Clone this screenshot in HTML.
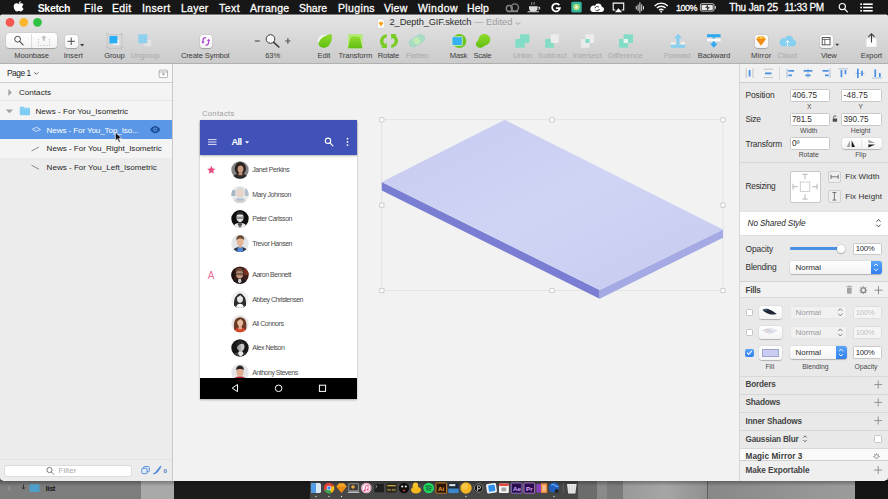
<!DOCTYPE html>
<html>
<head>
<meta charset="utf-8">
<title>Sketch</title>
<style>
*{box-sizing:border-box;margin:0;padding:0}
html,body{width:888px;height:499px;overflow:hidden;background:#7a7a7a;font-family:"Liberation Sans",sans-serif}
body{position:relative}
.a{position:absolute}
.t{position:absolute;white-space:nowrap;line-height:1}
#icons{position:absolute;left:0;top:0;width:888px;height:499px}
.inp{position:absolute;background:#fff;border:1px solid #c8c8c8;border-radius:1.5px}
.btn{position:absolute;background:linear-gradient(#ffffff,#f3f3f3);border-radius:3px;box-shadow:0 0.5px 1px rgba(0,0,0,.22),0 0 0 0.5px rgba(0,0,0,.05)}
.hr{position:absolute;height:1px;background:#d8d8d8}

</style>
</head>
<body>
<!-- desktop strip below window -->
<div class="a" style="left:0;top:480px;width:141px;height:19px;background:#7d7d7d"></div>
<div class="a" style="left:141px;top:480px;width:33px;height:19px;background:#a9a9a9"></div>
<div class="a" style="left:174px;top:480px;width:137px;height:19px;background:#1b1b1b"></div>
<div class="a" style="left:310px;top:480px;width:270px;height:19px;background:#464646"></div>
<div class="a" style="left:578px;top:480px;width:19px;height:19px;background:#6c6c6c"></div><div class="a" style="left:597px;top:480px;width:10px;height:19px;background:#8a8a8a"></div><div class="a" style="left:607px;top:480px;width:16px;height:19px;background:#7b7b7b"></div><div class="a" style="left:623px;top:480px;width:84px;height:19px;background:linear-gradient(90deg,#999,#a6a6a6 50%,#909090)"></div>
<div class="a" style="left:707px;top:480px;width:149px;height:19px;background:linear-gradient(90deg,#888,#9c9c9c);border-left:1px solid #5e5e5e"></div>
<div class="a" style="left:855px;top:480px;width:33px;height:19px;background:#151515"></div>

<div class="a" style="left:0;top:480px;width:888px;height:6px;background:linear-gradient(rgba(0,0,0,.35),rgba(0,0,0,0))"></div>
<!-- menubar -->
<div class="a" style="left:0;top:0;width:888px;height:15px;background:#171717"></div>

<!-- window -->
<div class="a" style="left:0;top:14px;width:888px;height:467px;background:#f0f0f0;border-radius:4px 4px 5px 5px;overflow:hidden">
  <!-- title+toolbar -->
  <div class="a" style="left:0;top:0;width:888px;height:50px;background:linear-gradient(#777 0,#777 1px,#ececec 1px,#e4e4e4 2.5px,#dcdcdc 35%,#cbcbcb);border-bottom:1px solid #b0b0b0"></div>
</div>

<!-- left sidebar -->
<div class="a" style="left:0;top:64px;width:173px;height:417px;background:#f4f4f4;border-right:1px solid #c9c9c9;border-radius:0 0 0 5px"></div>
<div class="a" style="left:0;top:64px;width:172px;height:18.7px;background:#f7f7f7;border-bottom:1px solid #cdcdcd"></div>
<div class="a" style="left:0;top:158px;width:172px;height:323px;background:#ececec;border-radius:0 0 0 5px"></div>
<div class="hr" style="left:0;top:100px;width:172px;background:#e6e6e6"></div>
<div class="a" style="left:0;top:120px;width:172px;height:19px;background:#5a97e6"></div>
<!-- filter bar -->
<div class="a" style="left:0;top:459px;width:172px;height:22px;background:#ececec;border-top:1px solid #e4e4e4;border-radius:0 0 0 5px"></div>
<div class="inp" style="left:4px;top:465px;width:128px;height:12px;border-radius:3px;border-color:#dbdbdb"></div>

<!-- canvas -->
<div class="a" style="left:173px;top:64px;width:566px;height:417px;background:#f2f2f2"></div>

<!-- phone artboard -->
<div class="a" style="left:200px;top:120px;width:157px;height:279px;background:#fff;box-shadow:0 0.5px 2px rgba(0,0,0,.28)"></div>
<div class="a" style="left:200px;top:120px;width:157px;height:34.5px;background:#4051b8;box-shadow:0 1px 2px rgba(0,0,0,.3)"></div>
<div class="a" style="left:200px;top:378px;width:157px;height:21px;background:#000"></div>

<!-- right inspector -->
<div class="a" style="left:739px;top:64px;width:149px;height:417px;background:#e9e9e9;border-left:1px solid #d6d6d6;border-radius:0 0 5px 0"></div>
<div class="a" style="left:740px;top:64px;width:148px;height:18.7px;background:#f1f1f1;border-bottom:1px solid #cdcdcd"></div>
<!-- inputs -->
<div class="inp" style="left:789.5px;top:89px;width:40px;height:12.5px"></div>
<div class="inp" style="left:841px;top:89px;width:40.5px;height:12.5px"></div>
<div class="inp" style="left:789.5px;top:113px;width:40px;height:12.5px"></div>
<div class="inp" style="left:841px;top:113px;width:40.5px;height:12.5px"></div>
<div class="inp" style="left:789.5px;top:137px;width:40px;height:12.5px"></div>
<div class="btn" style="left:841.5px;top:138px;width:40px;height:11px"></div>
<div class="hr" style="left:740px;top:162px;width:148px"></div>
<div class="inp" style="left:789.5px;top:170.5px;width:31.5px;height:32px;border-radius:2px"></div>
<div class="a" style="left:827.5px;top:170.5px;width:13.5px;height:12.5px;border:1px solid #cfcfcf;border-radius:2px;background:#efefef"></div>
<div class="a" style="left:827.5px;top:190px;width:13.5px;height:12.5px;border:1px solid #cfcfcf;border-radius:2px;background:#efefef"></div>
<!-- shared style -->
<div class="a" style="left:740px;top:211px;width:148px;height:24.5px;background:#fff;border-top:1px solid #e4e4e4;border-bottom:1px solid #e0e0e0"></div>
<!-- opacity -->
<div class="a" style="left:790px;top:247px;width:51px;height:2.6px;background:#4a90e2;border-radius:1.3px"></div>
<div class="a" style="left:837px;top:244.5px;width:8px;height:8px;border-radius:50%;background:#fff;box-shadow:0 0.5px 1.5px rgba(0,0,0,.45)"></div>
<div class="inp" style="left:853px;top:243px;width:28.5px;height:11.5px"></div>
<!-- blending select -->
<div class="btn" style="left:790px;top:261px;width:91.5px;height:12.5px;border-radius:2.5px"></div>
<div class="a" style="left:870.5px;top:261px;width:11px;height:12.5px;background:linear-gradient(#5aa5f6,#2f7ff0);border-radius:0 2.5px 2.5px 0"></div>
<!-- fills header -->
<div class="a" style="left:740px;top:280.5px;width:148px;height:17.5px;background:#f1f1f1;border-top:1px solid #d4d4d4;border-bottom:1px solid #dcdcdc"></div>
<!-- fill rows -->
<div class="a" style="left:745.5px;top:308.5px;width:7.5px;height:7.5px;background:#fff;border:1px solid #c4c4c4;border-radius:1.5px"></div>
<div class="a" style="left:745.5px;top:328.5px;width:7.5px;height:7.5px;background:#fff;border:1px solid #c4c4c4;border-radius:1.5px"></div>
<div class="a" style="left:745px;top:348.5px;width:8.5px;height:8.5px;background:linear-gradient(#59a4f5,#2f7eef);border-radius:2px"></div>
<div class="btn" style="left:758.5px;top:305.5px;width:23px;height:13.5px"></div>
<div class="btn" style="left:758.5px;top:325.5px;width:23px;height:13.5px"></div>
<div class="btn" style="left:758.5px;top:345.5px;width:23px;height:14px"></div>
<div class="a" style="left:761.5px;top:348.5px;width:17px;height:8px;background:#c9cdf1;border:0.5px solid #9fa3c9"></div>
<div class="a" style="left:790px;top:305.5px;width:56.5px;height:13.5px;background:#f1f1f1;border:1px solid #e6e6e6;border-radius:2.5px"></div>
<div class="a" style="left:790px;top:325.5px;width:56.5px;height:13.5px;background:#f1f1f1;border:1px solid #e6e6e6;border-radius:2.5px"></div>
<div class="btn" style="left:790px;top:345.5px;width:56.5px;height:13.5px;border-radius:2.5px"></div>
<div class="a" style="left:835.5px;top:345.5px;width:11px;height:13.5px;background:linear-gradient(#5aa5f6,#2f7ff0);border-radius:0 2.5px 2.5px 0"></div>
<div class="a" style="left:853px;top:306px;width:28.5px;height:12.5px;background:#f4f4f4;border:1px solid #dedede;border-radius:1.5px"></div>
<div class="a" style="left:853px;top:326px;width:28.5px;height:12.5px;background:#f4f4f4;border:1px solid #dedede;border-radius:1.5px"></div>
<div class="inp" style="left:853px;top:346px;width:28.5px;height:12.5px"></div>
<!-- section dividers -->
<div class="hr" style="left:740px;top:375.5px;width:148px"></div>
<div class="hr" style="left:740px;top:393.5px;width:148px"></div>
<div class="hr" style="left:740px;top:411.5px;width:148px"></div>
<div class="hr" style="left:740px;top:429.5px;width:148px"></div>
<div class="hr" style="left:740px;top:447.5px;width:148px"></div>
<div class="a" style="left:874px;top:434.5px;width:8px;height:8px;background:#fff;border:1px solid #c4c4c4;border-radius:1.5px"></div>
<div class="a" style="left:740px;top:448.5px;width:148px;height:11px;background:#f9f9f9"></div>
<div class="a" style="left:740px;top:459.5px;width:148px;height:21.5px;background:#efefef;border-top:1px solid #d0d0d0;border-radius:0 0 5px 0"></div>

<!-- toolbar buttons -->
<div class="btn" style="left:6px;top:33px;width:51px;height:15px;border-radius:3.5px"></div>
<div class="a" style="left:31px;top:33.5px;width:1px;height:14px;background:#dcdcdc"></div>
<div class="btn" style="left:64.5px;top:35px;width:13.5px;height:12.5px"></div>
<div class="btn" style="left:199.5px;top:34.5px;width:12.5px;height:13px"></div>
<div class="btn" style="left:755px;top:35px;width:13px;height:12.5px"></div>
<div class="btn" style="left:819.5px;top:35px;width:13px;height:12.5px"></div>

<svg id="icons" viewBox="0 0 888 499" width="888" height="499">
<defs>
  <linearGradient id="gTop" x1="0" y1="0" x2="1" y2="1">
    <stop offset="0" stop-color="#c6caf0"/><stop offset="0.5" stop-color="#d0d4f4"/><stop offset="1" stop-color="#c6caef"/>
  </linearGradient>
  <linearGradient id="gGreen" x1="0" y1="0" x2="0" y2="1">
    <stop offset="0" stop-color="#8fdc2e"/><stop offset="1" stop-color="#62be12"/>
  </linearGradient>
  <clipPath id="cpPhone"><rect x="200" y="154" width="157" height="224"/></clipPath>
</defs>

<!-- ================= MENUBAR ICONS ================= -->
<g id="mb">
  <!-- apple -->
  <path fill="#fff" transform="translate(-2.9 -2.5) scale(1.17)" d="M20.3 3.2c.1.9-.7 2-1.7 2-.2-.9.7-1.9 1.700-2zM22.600 9.600c-.4 1-1.300 2.300-2.200 2.300-.7 0-.9-.4-1.800-.4s-1.100.4-1.800.4c-1.100 0-2.600-2.300-2.600-4.200 0-1.800 1.200-2.700 2.300-2.700.8 0 1.400.5 1.900.5s1.200-.6 2.200-.5c.7 0 1.500.4 1.900 1.100-1.500.9-1.300 2.900.1 3.500z"/>
  <!-- creative cloud (gray) -->
  <g fill="none" stroke="#858585" stroke-width="1.400">
    <circle cx="509.300" cy="8.500" r="3"/><circle cx="514.800" cy="7.600" r="3.700"/><path d="M507 11.500h11"/>
  </g>
  <!-- coffee cup -->
  <g fill="#dcdcdc">
    <path d="M529 6.200h8.500v1.800a4.200 3.600 0 0 1-8.500 0z"/><rect x="527.500" y="11.200" width="11.500" height="1" rx=".5"/>
    <path d="M537.500 6.800h1.400a1.300 1.300 0 0 1 0 2.800h-1.400v-.8h1.200a.6.600 0 0 0 0-1.200h-1.200z"/>
    <path d="M531.500 2.200c.8.800-.6 1.400.2 2.600M534 2c.8.900-.6 1.500.2 2.800" stroke="#dcdcdc" stroke-width=".7" fill="none"/>
  </g>
  <!-- G -->
  <path fill="none" stroke="#fff" stroke-width="1.800" d="M559.300 5.300a3.900 3.900 0 1 0 .6 2.900h-4"/>
  <!-- teal square app -->
  <rect x="571.300" y="1.700" width="10.400" height="10.800" rx="1.600" fill="#35b59c"/>
  <circle cx="576.500" cy="7.100" r="3.300" fill="#a8dd7d"/><circle cx="576.500" cy="7.100" r="1.600" fill="#e8f6c8"/>
  <!-- cloud sync -->
  <path fill="#fff" d="M592.500 12h9a2.700 2.700 0 0 0 .4-5.350 3.600 3.600 0 0 0-6.900-.9 3.150 3.150 0 0 0-2.500 6.250z"/>
  <path fill="none" stroke="#171717" stroke-width=".9" d="M595 8.200a2.200 2.200 0 0 1 3.800-1M599.400 9a2.200 2.200 0 0 1-3.800 1"/>
  <!-- airplay -->
  <path fill="none" stroke="#fff" stroke-width="1.100" d="M615.300 10h-2.100v-6.900h10.500v6.900h-2.100"/>
  <path fill="#fff" d="M618.450 8.300l3.500 4h-7z"/>
  <!-- audio bars -->
  <g stroke="#e0e0e0" stroke-width="1" stroke-linecap="round">
    <path d="M636.300 6.500v2.500M638.100 5v5.500M639.900 2.800v9.700M641.700 4.800v5.800M643.500 6.500v2.500"/>
  </g>
  <!-- wifi -->
  <g fill="none" stroke="#fff" stroke-width="1.350">
    <path d="M654.600 5.900a9.300 9.300 0 0 1 13.200 0"/><path d="M656.800 8.100a6.200 6.200 0 0 1 8.800 0"/><path d="M659 10.200a3.100 3.100 0 0 1 4.400 0"/>
  </g>
  <circle cx="661.200" cy="11.700" r=".9" fill="#fff"/>
  <!-- battery -->
  <rect x="700.400" y="3.700" width="13.600" height="7.400" rx="1.400" fill="none" stroke="#d8d8d8" stroke-width=".9"/>
  <rect x="701.600" y="4.900" width="11.200" height="5" rx=".5" fill="#e6e6e6"/>
  <rect x="714.700" y="6" width="1.200" height="2.800" rx=".5" fill="#d8d8d8"/>
  <path fill="#171717" d="M708.300 4.500l-3.200 3.300h2.300l-.8 2.900 3.300-3.500h-2.300z"/>
  <!-- search -->
  <circle cx="842.300" cy="6.600" r="3.100" fill="none" stroke="#fff" stroke-width="1.200"/>
  <path d="M844.500 8.900l2.900 3" stroke="#fff" stroke-width="1.300" stroke-linecap="round"/>
  <!-- list -->
  <g fill="#fff">
    <rect x="860.300" y="3.400" width="1.700" height="1.600"/><rect x="863.200" y="3.400" width="9.500" height="1.600"/>
    <rect x="860.300" y="6.700" width="1.700" height="1.600"/><rect x="863.200" y="6.700" width="9.500" height="1.600"/>
    <rect x="860.300" y="10" width="1.700" height="1.600"/><rect x="863.200" y="10" width="9.500" height="1.600"/>
  </g>
</g>

<!-- ================= TITLEBAR ================= -->
<circle cx="10" cy="22.300" r="4.350" fill="#f5564f"/>
<circle cx="23.700" cy="22.300" r="4.350" fill="#f9b62c"/>
<circle cx="37.500" cy="22.300" r="4.350" fill="#2fc341"/>
<!-- doc icon -->
<path d="M377.500 18.900h4.600l2.200 2.200v7h-6.800z" fill="#fff" stroke="#c9c9c9" stroke-width=".5"/>
<path d="M378.600 23.300l1.200-1.500h2.400l1.200 1.500-2.400 3.100z" fill="#f5a623"/>
<path d="M515.800 22.200l2.300 2.300 2.300-2.300" fill="none" stroke="#9b9b9b" stroke-width=".9"/>

<!-- ================= TOOLBAR ICONS ================= -->
<!-- moonbase: search -->
<circle cx="17.600" cy="39.200" r="2.900" fill="none" stroke="#4a4a4a" stroke-width="1"/>
<path d="M19.700 41.400l3.400 3.500" stroke="#4a4a4a" stroke-width="1.100" stroke-linecap="round"/>
<!-- moonbase: upload dotted -->
<g fill="#c4c4c4">
  <path d="M43.800 35.300l2.800 2.800h-1.700v2.700h-2.200v-2.700h-1.700z"/>
  <g>
    <rect x="38" y="39" width="1" height="1"/><rect x="38" y="41" width="1" height="1"/><rect x="38" y="43" width="1" height="1"/>
    <rect x="49" y="39" width="1" height="1"/><rect x="49" y="41" width="1" height="1"/><rect x="49" y="43" width="1" height="1"/>
    <rect x="38" y="45" width="1" height="1"/><rect x="40.200" y="45" width="1" height="1"/><rect x="42.400" y="45" width="1" height="1"/><rect x="44.600" y="45" width="1" height="1"/><rect x="46.800" y="45" width="1" height="1"/><rect x="49" y="45" width="1" height="1"/>
  </g>
</g>
<!-- insert + -->
<path d="M71.200 37.600v7.400M67.500 41.300h7.400" stroke="#4a4a4a" stroke-width="1"/>
<path d="M80.100 44.100h4l-2 2.300z" fill="#3a3a3a"/>
<!-- group -->
<rect x="107.200" y="34.300" width="14.800" height="14" fill="none" stroke="#bdbdbd" stroke-width=".6"/>
<rect x="112.700" y="39.500" width="6.800" height="5.700" fill="#f4f4f4" stroke="#d2d2d2" stroke-width=".4"/>
<rect x="109.400" y="35.900" width="8" height="7.500" fill="#2aaef5"/>
<g fill="#fff" stroke="#a5a5a5" stroke-width=".4"><rect x="106.400" y="33.500" width="1.600" height="1.600"/><rect x="121.200" y="33.500" width="1.600" height="1.600"/><rect x="106.400" y="47.500" width="1.600" height="1.600"/><rect x="121.200" y="47.500" width="1.600" height="1.600"/></g>
<!-- ungroup -->
<rect x="144" y="39.800" width="7.300" height="6.400" fill="#e4e4e4" stroke="#d6d6d6" stroke-width=".4"/>
<rect x="138.300" y="34.300" width="9" height="9" fill="#8fd0ee"/>
<!-- create symbol -->
<g fill="none" stroke="#b047d4" stroke-width="1.250" stroke-linecap="round">
  <path d="M205.600 37.500c-1.700 0-2.600 1-2.600 2.500v2.200"/><path d="M206 45c1.700 0 2.600-1 2.600-2.500v-2.200"/>
</g>
<path d="M201.300 41.600h3.400l-1.700 2.200z" fill="#b047d4"/><path d="M210.300 40.900h-3.400l1.700-2.200z" fill="#b047d4"/>
<!-- zoom -->
<path d="M254.800 41h5" stroke="#555" stroke-width="1.200"/>
<path d="M285.200 41h5.400M287.900 38.300v5.400" stroke="#555" stroke-width="1.200"/>
<circle cx="270.500" cy="39" r="4.300" fill="#f6f6f6" stroke="#3f3f3f" stroke-width="1"/>
<path d="M273.800 42.300l5 4.700" stroke="#3f3f3f" stroke-width="1.700" stroke-linecap="round"/>
<!-- edit -->
<circle cx="324.300" cy="41.100" r="6.700" fill="#f6f6f6" stroke="#d4d4d4" stroke-width=".7"/>
<path d="M318.300 44.600c.6-5 5.200-9.400 13.400-10.500.7 4.500-.2 9-3.200 12a6.600 6.600 0 0 1-10.200-1.500z" fill="url(#gGreen)"/>
<!-- transform -->
<rect x="348" y="34" width="14.400" height="14.300" fill="#b5ea7a"/>
<path d="M348 48.300l2.200-9.500c.5-1.600 1.400-2.200 2.700-2.200h4.600c1.300 0 2.200.6 2.700 2.200l2.200 9.500z" fill="url(#gGreen)"/>
<!-- rotate -->
<g fill="#78cc24">
  <path d="M386.800 34.300c-4.300.6-6.800 3.500-6.800 7 0 2.300 1.200 4.300 2.700 5.400l-1.600 1.300h6l-.6-5.500-1.500 1.500c-1-.8-1.600-1.800-1.600-3 0-1.900 1.300-3.300 3.400-3.800z"/>
  <path d="M391.200 47.800c4.300-.6 6.800-3.500 6.800-7 0-2.300-1.200-4.300-2.700-5.400l1.600-1.300h-6l.6 5.500 1.500-1.500c1 .8 1.600 1.800 1.600 3 0 1.900-1.300 3.300-3.400 3.800z"/>
</g>
<!-- flatten -->
<g transform="rotate(-31 416.900 40.700)">
  <rect x="408.700" y="36.900" width="16.400" height="7.600" rx="3.800" fill="#a9dfc0" stroke="#8fd3c8" stroke-width=".7"/>
  <rect x="414" y="37.400" width="5.600" height="6.600" fill="#c4ecb5"/>
</g>
<!-- mask -->
<circle cx="459.400" cy="41" r="6.900" fill="#6cc71d"/>
<rect x="452" y="36.800" width="10.200" height="8.600" fill="#35b2f2" stroke="#dff3d0" stroke-width=".7"/>
<!-- scale -->
<path d="M484.200 34c3.600 0 6.100 2.500 6.100 5.500 0 3.400-2.600 5.500-5.800 6.200-1.200 1.400-2.600 2.100-4.400 2.100-2.400 0-4.200-1.600-4.200-3.800 0-1.600.9-2.900 2.300-3.600.5-3.700 2.800-6.400 6-6.400z" fill="url(#gGreen)"/>
<!-- union -->
<g fill="#83dcc6">
  <rect x="515.300" y="39" width="9.400" height="8.700"/><rect x="520" y="34.300" width="9.400" height="8.700"/>
</g>
<!-- subtract -->
<rect x="550.700" y="34.300" width="8" height="8.700" fill="#ececec"/>
<path d="M545.200 39h5.500v4h3.200v4.700h-8.700z" fill="#83dcc6"/>
<!-- intersect -->
<rect x="581" y="39" width="8.500" height="8.700" fill="#eaeaea"/><rect x="585.400" y="34.300" width="8.700" height="8.700" fill="#ececec"/>
<rect x="585.400" y="39" width="4.100" height="4" fill="#83dcc6"/>
<!-- difference -->
<g fill="#83dcc6"><rect x="618.900" y="39" width="9.200" height="8.700"/><rect x="623.600" y="34.300" width="9.400" height="8.700"/></g>
<rect x="623.600" y="39" width="4.500" height="4" fill="#e6f3ee"/>
<!-- forward -->
<g fill="#86cff0">
  <path d="M678 33.800l4 4.500h-2.500v6.300h-3v-6.300h-2.500z"/>
  <rect x="670.800" y="44.700" width="14.300" height="3.100"/>
</g>
<rect x="670.800" y="42.200" width="4.500" height="2.200" fill="#f3f3f3"/><rect x="680.700" y="42.200" width="4.400" height="2.200" fill="#f3f3f3"/>
<!-- backward -->
<rect x="707" y="34.200" width="13.600" height="3" fill="#2ea9f1"/>
<path d="M712.400 37.200h2.800v6.200h2.500l-3.900 4.400-3.900-4.400h2.500z" fill="#2ea9f1"/>
<rect x="707" y="38.600" width="13.600" height="2.800" fill="#fafafa" stroke="#d9d9d9" stroke-width=".3"/>
<!-- mirror diamond -->
<g transform="translate(761 40.900) scale(1.270) translate(-761 -40.700)">
<path d="M757.200 39.300l1.800-2.200h4l1.800 2.200-3.800 5.100z" fill="#f6a623"/>
<path d="M757.200 39.300h7.600l-3.800 5.100z" fill="#ee8c13"/>
<path d="M759 37.100l2 2.200 2-2.200z" fill="#fcd062"/>
</g>
<!-- cloud -->
<path d="M782.500 46.200h10.400a3.300 3.300 0 0 0 .5-6.550 4.500 4.500 0 0 0-8.600-1.200 3.900 3.900 0 0 0-2.300 7.750z" fill="#86cff0"/>
<path d="M787.600 46v-5.200M785.600 42.600l2-2 2 2" stroke="#fff" stroke-width=".9" fill="none"/>
<!-- view -->
<rect x="822.200" y="37.500" width="7.800" height="7.300" fill="#fff" stroke="#4a4a4a" stroke-width=".9"/>
<path d="M822.200 39.400h7.800M824.800 39.400v5.400" stroke="#4a4a4a" stroke-width=".8"/>
<path d="M835.200 43.700h4l-2 2.300z" fill="#3a3a3a"/>
<!-- export -->
<rect x="866.300" y="38.300" width="10.400" height="8.800" rx=".6" fill="#fbfbfb" stroke="#d5d5d5" stroke-width=".4"/>
<path d="M871.500 42.500v-8.500M868.400 36.900l3.100-3.100 3.100 3.100" stroke="#3c3c3c" stroke-width="1.050" fill="none"/>

<!-- ================= LEFT SIDEBAR ================= -->
<path d="M34.300 72.300l2 2 2-2" fill="none" stroke="#555" stroke-width=".9"/>
<rect x="159.200" y="70.100" width="8.300" height="7.500" rx=".8" fill="#fdfdfd" stroke="#9a9a9a" stroke-width=".7"/>
<path d="M159.200 72h8.300" stroke="#9a9a9a" stroke-width=".7"/>
<path d="M161.800 73.600h3.200l-1.600 1.900z" fill="#8a8a8a"/>
<!-- disclosure triangles -->
<path d="M8.300 89l3.600 3.500-3.600 3.500z" fill="#a2a2a2"/>
<path d="M5.800 109.600h7.200l-3.600 3.700z" fill="#a2a2a2"/>
<!-- folder -->
<path d="M19.800 107.600a.8.800 0 0 1 .8-.8h3l.9.900h4.700a.8.800 0 0 1 .8.800v6a.8.800 0 0 1-.8.800h-8.600a.8.800 0 0 1-.8-.8z" fill="#7ecbf2"/>
<path d="M19.800 108.800h10.200" stroke="#a6dcf7" stroke-width=".6"/>
<!-- layer shape icons -->
<path d="M32.300 129.300l4.200-2 4 2.200-4.200 2z" fill="none" stroke="#eaf2fd" stroke-width=".8"/>
<path d="M31.500 151l7.500-4" stroke="#6e6e6e" stroke-width=".8"/>
<path d="M31.500 165.200l7.500 4" stroke="#6e6e6e" stroke-width=".8"/>
<!-- eye -->
<path d="M150 129.600c1.500-2.500 3.300-3.700 5.200-3.700s3.700 1.200 5.200 3.700c-1.500 2.500-3.300 3.700-5.200 3.700s-3.700-1.200-5.200-3.700z" fill="#1f4f9a"/>
<circle cx="155.200" cy="129.600" r="2" fill="#5a97e6"/><circle cx="155.200" cy="129.600" r="1" fill="#1f4f9a"/>
<!-- cursor -->
<path transform="translate(115.400 131.900) scale(1.150) translate(-115.800 -130.700)" d="M115.800 130.700v7.700l1.800-1.600 1.300 3 1.200-.5-1.300-3h2.400z" fill="#111" stroke="#fff" stroke-width=".55" stroke-linejoin="round"/>
<!-- filter -->
<circle cx="49.500" cy="470" r="2.600" fill="none" stroke="#6e6e6e" stroke-width=".9"/>
<path d="M51.400 472l2.300 2.400" stroke="#6e6e6e" stroke-width=".9" stroke-linecap="round"/>
<g stroke="#4a86d8" stroke-width=".9">
  <rect x="143.600" y="466.500" width="5.700" height="5.300" rx=".9" fill="#e3ecf8"/><rect x="141.800" y="468.300" width="5.200" height="5.300" rx=".9" fill="#e3ecf8"/>
</g>
<path d="M153 474c1.300-.5 2.300-1.300 3-2.300l4.600-5.800.6.500-3 4.800c-.9 1.400-2.300 2.500-5.200 2.800z" fill="#3f7fd6" stroke="#3f7fd6" stroke-width=".5" stroke-linejoin="round"/>

<!-- ================= PHONE ================= -->
<!-- hamburger -->
<path d="M208 139.600h8.500M208 142h8.500M208 144.400h8.500" stroke="#fff" stroke-width=".85"/>
<path d="M245 141.200h4.200l-2.100 2.300z" fill="#fff"/>
<circle cx="328" cy="140.800" r="2.700" fill="none" stroke="#fff" stroke-width="1.100"/>
<path d="M330 142.900l2.900 3" stroke="#fff" stroke-width="1.200" stroke-linecap="round"/>
<g fill="#fff"><circle cx="347.500" cy="138.700" r=".9"/><circle cx="347.500" cy="141.900" r=".9"/><circle cx="347.500" cy="145.100" r=".9"/></g>
<!-- star -->
<path d="M211.300 165.800l1.200 2.700 2.900.3-2.200 2 .6 2.900-2.500-1.500-2.500 1.500.6-2.900-2.200-2 2.900-.3z" fill="#e8487d"/>
<!-- nav -->
<path d="M237.500 384.500v7.200l-5.300-3.600z" fill="none" stroke="#fff" stroke-width="1"/>
<circle cx="278.600" cy="388.300" r="3.300" fill="none" stroke="#fff" stroke-width="1"/>
<rect x="319.400" y="385.200" width="6.200" height="6.200" fill="none" stroke="#fff" stroke-width="1"/>

<!-- avatars -->
<g clip-path="url(#cpPhone)">
 <!-- 1 Janet -->
 <g><clipPath id="c1"><circle cx="240" cy="170" r="8.700"/></clipPath><g clip-path="url(#c1)">
  <rect x="231" y="161" width="18" height="18" fill="#858585"/>
  <ellipse cx="240.300" cy="168.500" rx="5.600" ry="6.500" fill="#2a211e"/>
  <ellipse cx="240.500" cy="169.300" rx="2.900" ry="3.700" fill="#c89b82"/>
  <path d="M232 179c1-4 4-5.500 8.300-5.500s7 1.500 8.200 5.500z" fill="#30292a"/>
  <path d="M239 172.500h3l.6 2.800h-4.200z" fill="#bf8f78"/>
 </g></g>
 <!-- 2 Mary -->
 <g><clipPath id="c2"><circle cx="240" cy="194.500" r="8.700"/></clipPath><g clip-path="url(#c2)">
  <rect x="231" y="185.500" width="18" height="18" fill="#e9ebec"/>
  <rect x="231" y="190" width="4.500" height="6" fill="#a9b7c6"/><rect x="245" y="189" width="4" height="7" fill="#b3bfca"/>
  <ellipse cx="240" cy="192.300" rx="4.800" ry="5.400" fill="#dcdad7"/>
  <ellipse cx="240.100" cy="193.300" rx="2.700" ry="3.400" fill="#ecd3c3"/>
  <path d="M232.500 203.500c.8-4 3.700-5.500 7.600-5.500s6.600 1.500 7.400 5.500z" fill="#d9d4cf"/>
  <path d="M237.300 197.600c1.700 1.400 3.900 1.400 5.600 0l1 2.400c-2.300 1.500-5.300 1.500-7.600 0z" fill="#b4c4d8"/>
 </g></g>
 <!-- 3 Peter -->
 <g><clipPath id="c3"><circle cx="240" cy="218.800" r="8.700"/></clipPath><g clip-path="url(#c3)">
  <rect x="231" y="209.800" width="18" height="18" fill="#0d0d0d"/>
  <ellipse cx="240" cy="217.600" rx="3.700" ry="4.600" fill="#e4e4e4"/>
  <path d="M236.200 215.500c.2-2.900 1.800-4.200 3.800-4.200s3.600 1.300 3.800 4.200c-1.400-1.200-6.200-1.200-7.600 0z" fill="#2b2b2b"/>
  <path d="M236.600 217h2.800v1.600h-2.800zM240.600 217h2.800v1.600h-2.800z" fill="none" stroke="#222" stroke-width=".5"/>
  <path d="M233 227.800c.7-3.500 3.300-4.800 7-4.800s6.300 1.300 7 4.800z" fill="#f2f2f2"/>
  <path d="M239 222.300h2l1.400 2.200-2.400 3.300-2.400-3.300z" fill="#555"/>
 </g></g>
 <!-- 4 Trevor -->
 <g><clipPath id="c4"><circle cx="240" cy="243.300" r="8.700"/></clipPath><g clip-path="url(#c4)">
  <rect x="231" y="234.300" width="18" height="18" fill="#e3e6e8"/>
  <ellipse cx="240.200" cy="241.600" rx="3.500" ry="4.300" fill="#e3b798"/>
  <path d="M236.300 240.200c-.2-3.300 1.600-4.900 4-4.900s4.200 1.500 3.900 4.700c-1.500-1.800-5.500-2.400-7.900.2z" fill="#6b4a33"/>
  <path d="M232.500 252.300c.6-3.800 3.300-5.300 7.600-5.300s7 1.500 7.600 5.300z" fill="#2f3a4a"/>
  <path d="M238 246.500h4.400l1 5.800h-6.400z" fill="#4f86d6"/>
  <path d="M238.900 245h2.600l.4 2-1.700 1.100-1.700-1.100z" fill="#dcae90"/>
 </g></g>
 <!-- 5 Aaron -->
 <g><clipPath id="c5"><circle cx="240" cy="275.100" r="8.700"/></clipPath><g clip-path="url(#c5)">
  <rect x="231" y="266.100" width="18" height="18" fill="#3a1f1a"/>
  <rect x="244" y="266" width="5" height="9" fill="#7a2e22"/><rect x="231" y="266" width="3.500" height="18" fill="#20110f"/>
  <ellipse cx="239.600" cy="273.800" rx="3.600" ry="4.500" fill="#c79a80"/>
  <path d="M235.800 272.300c-.1-3 1.600-4.400 3.800-4.400s3.900 1.400 3.800 4.400c-1.600-1.400-6-1.400-7.600 0z" fill="#6e4a38"/>
  <path d="M236.200 273.200h2.900v1.600h-2.900zM240 273.200h2.900v1.600h-2.900z" fill="none" stroke="#1f1412" stroke-width=".55"/>
  <path d="M232 284.100c.7-3.600 3.400-5 7.600-5s6.900 1.400 7.600 5z" fill="#1d1a1c"/>
  <path d="M238.500 278.800h2.400l.6 2.600-1.800 2-1.800-2z" fill="#d9d0cc"/>
 </g></g>
 <!-- 6 Abbey -->
 <g><clipPath id="c6"><circle cx="240" cy="299.400" r="8.700"/></clipPath><g clip-path="url(#c6)">
  <rect x="231" y="290.400" width="18" height="18" fill="#f1f1f1"/>
  <path d="M234.500 308.400c-1.300-6-.5-14 5.500-14s6.800 8 5.500 14z" fill="#2d2d2d"/>
  <ellipse cx="240" cy="298.800" rx="3" ry="3.900" fill="#e6e6e6"/>
  <path d="M236.800 297.200c1.500-.3 2.600-1.100 3.400-2.300.8 1.200 1.900 2 3 2.300.2-2.500-1.200-3.700-3.100-3.700s-3.500 1.200-3.300 3.700z" fill="#2d2d2d"/>
  <path d="M235.800 308.400c.4-3 1.800-4.600 4.200-4.600s3.800 1.600 4.200 4.600z" fill="#fafafa"/>
 </g></g>
 <!-- 7 Ali -->
 <g><clipPath id="c7"><circle cx="240" cy="323.700" r="8.700"/></clipPath><g clip-path="url(#c7)">
  <rect x="231" y="314.700" width="18" height="18" fill="#e9e7e5"/>
  <path d="M234.300 330c-1.200-6-.3-12.500 5.900-12.500s6.900 6.500 5.800 12.500z" fill="#6b3a26"/>
  <ellipse cx="240.200" cy="322.500" rx="2.900" ry="3.700" fill="#e7b99d"/>
  <path d="M237.100 321c1.400-.3 2.500-1 3.300-2.100.7 1.100 1.700 1.800 2.800 2.100.2-2.400-1.100-3.500-3-3.500s-3.300 1.100-3.100 3.500z" fill="#6b3a26"/>
  <path d="M233.500 332.700c.6-3.600 3-5 6.700-5s6.100 1.400 6.700 5z" fill="#d2492e"/>
  <path d="M238.800 326h2.800l.5 2.400-1.900 1.100-1.900-1.100z" fill="#e0b094"/>
 </g></g>
 <!-- 8 Alex -->
 <g><clipPath id="c8"><circle cx="240" cy="347.900" r="8.700"/></clipPath><g clip-path="url(#c8)">
  <rect x="231" y="338.900" width="18" height="18" fill="#161616"/>
  <ellipse cx="240.800" cy="346.800" rx="3.700" ry="4.600" fill="#c9c9c9"/>
  <path d="M236.400 346c-.5-3.600 1.700-5.500 4.400-5.500 2.600 0 4.300 1.500 4 4.400-1.800-1.600-5.600-1.900-6.700 1.800z" fill="#262626"/>
  <path d="M240.800 344v7.400c-1.600 0-3.200-1.600-3.600-3.600z" fill="#8a8a8a" opacity=".55"/>
  <path d="M232.500 356.900c.7-3.500 3.300-4.900 7.800-4.900s6.700 1.400 7.400 4.900z" fill="#3c3c3c"/>
  <path d="M239 351.200h3.400l1 2.600-2.700 3.100-2.700-3.100z" fill="#e8e8e8"/>
 </g></g>
 <!-- 9 Anthony -->
 <g><clipPath id="c9"><circle cx="240" cy="372.600" r="8.700"/></clipPath><g clip-path="url(#c9)">
  <rect x="231" y="363.600" width="18" height="18" fill="#e2e4e6"/>
  <ellipse cx="240" cy="371.800" rx="3.600" ry="4.500" fill="#e0ae92"/>
  <path d="M236.200 370.300c-.3-3.200 1.500-4.800 3.800-4.800s4.100 1.600 3.800 4.800c-1.400-1.700-6.200-1.700-7.600 0z" fill="#2a2320"/>
  <path d="M232.800 381.600c.7-3.600 3.300-5 7.200-5s6.500 1.400 7.200 5z" fill="#b3262d"/>
 </g></g>
</g>

<!-- ================= ISOMETRIC SHAPE ================= -->
<rect x="381.800" y="119.800" width="341.200" height="170.700" fill="none" stroke="#d6d6d6" stroke-width=".5"/>
<polygon points="381.800,182 599.600,289.900 599.600,298.700 381.800,190.600" fill="#7a7ed2"/>
<polygon points="599.600,289.900 723,229.600 723,237.700 599.600,298.700" fill="#a6aae4"/>
<polygon points="504.700,119.800 723,229.600 599.600,289.900 381.800,182" fill="url(#gTop)"/>
<!-- selection -->
<g fill="#fff" stroke="#a8a8a8" stroke-width=".55">
  <rect x="379.700" y="117.700" width="4.200" height="4.200" rx=".25"/><rect x="549.900" y="117.700" width="4.200" height="4.200" rx=".25"/><rect x="720.900" y="117.700" width="4.200" height="4.200" rx=".25"/>
  <rect x="379.700" y="203.100" width="4.200" height="4.200" rx=".25"/><rect x="720.900" y="203.100" width="4.200" height="4.200" rx=".25"/>
  <rect x="379.700" y="288.400" width="4.200" height="4.200" rx=".25"/><rect x="549.900" y="288.400" width="4.200" height="4.200" rx=".25"/><rect x="720.900" y="288.400" width="4.200" height="4.200" rx=".25"/>
</g>
<!-- ================= INSPECTOR ICONS ================= -->
<g id="align">
  <!-- 1 distribute h -->
  <path d="M746.200 68.500v9.500M753 68.500v9.500" stroke="#b9b9b9" stroke-width=".8"/>
  <rect x="748.700" y="70" width="1.800" height="6.500" fill="#4a90e2"/>
  <!-- 2 distribute v -->
  <path d="M763.500 69.200h9.500M763.500 77.600h9.500" stroke="#b9b9b9" stroke-width=".8"/>
  <rect x="765" y="72.500" width="6.500" height="1.800" fill="#4a90e2"/>
  <path d="M779.500 66.500v13.500" stroke="#d0d0d0" stroke-width=".7"/>
  <!-- 3 align left -->
  <path d="M787 68.500v9.500" stroke="#9ab5d8" stroke-width=".8"/>
  <rect x="788.300" y="70" width="5.800" height="1.700" fill="#4a90e2"/><rect x="788.300" y="74.500" width="3.600" height="1.700" fill="#4a90e2"/>
  <!-- 4 align hcenter -->
  <path d="M808 68.500v9.500" stroke="#9ab5d8" stroke-width=".8"/>
  <rect x="803.600" y="70" width="8.800" height="1.700" fill="#4a90e2"/><rect x="805.400" y="74.500" width="5.200" height="1.700" fill="#4a90e2"/>
  <!-- 5 align right -->
  <path d="M830 68.500v9.500" stroke="#9ab5d8" stroke-width=".8"/>
  <rect x="822.500" y="70" width="6.200" height="1.700" fill="#4a90e2"/><rect x="825" y="74.500" width="3.700" height="1.700" fill="#4a90e2"/>
  <!-- 6 align top -->
  <path d="M838.500 68.800h9.500" stroke="#9ab5d8" stroke-width=".8"/>
  <rect x="840.600" y="70" width="1.700" height="7.200" fill="#4a90e2"/><rect x="844.600" y="70" width="1.700" height="4.200" fill="#4a90e2"/>
  <!-- 7 align vcenter -->
  <path d="M855.500 73.400h9" stroke="#9ab5d8" stroke-width=".8"/>
  <rect x="857" y="68.700" width="1.700" height="9.400" fill="#4a90e2"/><rect x="861.200" y="70.800" width="1.700" height="5.200" fill="#4a90e2"/>
  <!-- 8 align bottom -->
  <path d="M872 78h10.200" stroke="#9ab5d8" stroke-width=".8"/>
  <rect x="874.400" y="69.400" width="1.700" height="7.600" fill="#4a90e2"/><rect x="879" y="73" width="1.700" height="4" fill="#4a90e2"/>
</g>
<!-- lock -->
<rect x="832.700" y="118.400" width="4.400" height="3.300" rx=".5" fill="#4c4c4c"/>
<path d="M833.600 118.400v-1.200a1.300 1.300 0 0 1 2.600-.3" fill="none" stroke="#4c4c4c" stroke-width=".8"/>
<!-- flip -->
<path d="M861.700 138.500v11" stroke="#dadada" stroke-width=".7"/>
<path d="M850 140.200v6.800h-3.400z" fill="#a9a9a9"/><path d="M851.600 140.200v6.800h3.400z" fill="#1c1c1c"/>
<path d="M868.400 143h6.800l-6.800-3.200z" fill="#a9a9a9"/><path d="M868.400 144.400h6.800l-6.800 3.200z" fill="#1c1c1c"/>
<!-- resizing widget -->
<g fill="none" stroke="#9b9b9b" stroke-width=".7">
  <rect x="800.300" y="182" width="9.500" height="9.400" stroke="#bdbdbd"/>
  <path d="M805 174.300v4.800M802.300 174.300h5.400M805 194.300v4.800M802.300 199.100h5.400M793 186.700h4.800M793 183.700v6M812.300 186.700h4.800M817.100 183.700v6"/>
</g>
<path d="M831 176.800h7.200M831 174.600v4.400M838.200 174.600v4.400" stroke="#5a5a5a" stroke-width=".8" fill="none"/>
<path d="M834.400 192.500v7.600M832.400 192.500h4M832.400 200.100h4" stroke="#5a5a5a" stroke-width=".8" fill="none"/>
<!-- shared style chevrons -->
<path d="M876.500 221.700l2-2.200 2 2.200M876.500 224.700l2 2.200 2-2.200" fill="none" stroke="#3a3a3a" stroke-width=".9"/>
<!-- blending stepper -->
<path d="M874 266l2-2.100 2 2.100M874 268.700l2 2.100 2-2.100" fill="none" stroke="#fff" stroke-width=".9"/>
<!-- fills header icons -->
<g fill="#a3a3a3"><rect x="847" y="287.700" width="4.600" height="6" rx=".6"/><rect x="846.400" y="286.300" width="5.800" height="1" rx=".3"/><rect x="848.300" y="285.600" width="2" height="1"/></g>
<g>
  <circle cx="863.300" cy="290.200" r="2.300" fill="none" stroke="#8c8c8c" stroke-width="1.300"/>
  <g stroke="#8c8c8c" stroke-width="1.100"><path d="M863.300 286.300v1.400M863.300 292.700v1.400M859.400 290.200h1.400M865.800 290.200h1.400M860.500 287.400l1 1M865.100 292l1 1M866.100 287.400l-1 1M861.500 292l-1 1"/></g>
</g>
<path d="M874.500 290.200h8M878.500 286.200v8" stroke="#848484" stroke-width=".9"/>
<!-- fill previews -->
<path d="M762.500 310c1.500-1.200 3.600-1.500 5.400-.9 2.600.8 5.600 2.500 8.800 4.800-2.500.9-5.300.9-7.600.1-2.800-.9-5-2.300-6.600-4z" fill="#1d2433"/>
<path d="M763.500 310.200c1.300-.5 2.600-.4 3.800.1" stroke="#5aa0d8" stroke-width=".7" fill="none"/>
<g opacity=".8"><path d="M762.500 330.600l7.500-2.700 7 2.700-7.200 3.200z" fill="#dfe7f1" stroke="#a9bfd6" stroke-width=".4"/><path d="M764.200 330.200l4.800-.9M766 332l6-1.300" stroke="#e28a8a" stroke-width=".5"/><path d="M767 329.800l6.500 2.800" stroke="#8fb0d0" stroke-width=".5"/></g>
<!-- select chevrons -->
<path d="M838.300 310.800l2-2.100 2 2.100M838.300 313.700l2 2.100 2-2.100" fill="none" stroke="#6e6e6e" stroke-width=".85"/>
<path d="M838.300 331l2-2.100 2 2.100M838.300 333.900l2 2.100 2-2.100" fill="none" stroke="#6e6e6e" stroke-width=".85"/>
<path d="M839 351.300l2-2.100 2 2.100M839 354l2 2.100 2-2.100" fill="none" stroke="#fff" stroke-width=".9"/>
<!-- check -->
<path d="M747 352.700l1.700 1.800 3-3.700" fill="none" stroke="#fff" stroke-width="1.100"/>
<!-- section plus signs -->
<g stroke="#8a8a8a" stroke-width=".9">
  <path d="M874.200 384.600h8M878.200 380.600v8"/>
  <path d="M874.200 402.400h8M878.200 398.400v8"/>
  <path d="M874.200 420.600h8M878.200 416.600v8"/>
  <path d="M874.200 470h8M878.200 466v8"/>
</g>
<path d="M803.300 437.600l1.700-1.800 1.700 1.800M803.300 440l1.700 1.800 1.700-1.800" fill="none" stroke="#4a4a4a" stroke-width=".8"/>
<!-- magic mirror gear (cut) -->
<g><circle cx="876.500" cy="456.500" r="1.900" fill="none" stroke="#9a9a9a" stroke-width="1"/><g stroke="#9a9a9a" stroke-width=".9"><path d="M876.500 453.200v1.200M873.200 456.500h1.200M878.600 456.500h1.200M874.200 454.200l.8.800M878.800 454.200l-.8.800"/></g></g>

<!-- ================= DOCK ================= -->
<g id="dock">
  <!-- finder -->
  <rect x="311" y="483" width="10" height="10" rx="1.600" fill="#d9e6f2"/><path d="M311 484.600a1.600 1.600 0 0 1 1.600-1.600h3.400v10h-3.400a1.600 1.600 0 0 1-1.600-1.600z" fill="#4f9be6"/>
  <!-- chrome -->
  <circle cx="329" cy="488" r="5.200" fill="#e54335"/><path d="M329 488l-4.500 2.600a5.200 5.200 0 0 0 7 2.300z" fill="#34a853"/><path d="M329 488l2.500 4.900a5.200 5.200 0 0 0 2.200-7.200z" fill="#fbbc05"/><circle cx="329" cy="488" r="2.300" fill="#fff"/><circle cx="329" cy="488" r="1.800" fill="#4285f4"/>
  <!-- sketch -->
  <path d="M336.400 486.400l2.600-3.200h5l2.600 3.200-5.100 6.400z" fill="#f6a623"/><path d="M336.400 486.400h10.200l-5.100 6.400z" fill="#ec8a12"/>
  <!-- keynote-like -->
  <rect x="348.300" y="483.300" width="10.600" height="8.800" rx=".8" fill="#8c8c8c"/><rect x="349.300" y="484.200" width="8.600" height="6" fill="#3b3b3b"/><circle cx="353" cy="487" r="1.800" fill="#e6a23c"/><rect x="347.800" y="492" width="11.600" height="1" fill="#bdbdbd"/>
  <!-- itunes -->
  <circle cx="366.300" cy="488" r="5.200" fill="#fafafa"/><circle cx="366.300" cy="488" r="4.400" fill="none" stroke="#e85aa0" stroke-width=".8"/><path d="M365.300 490.300v-4.300l2.800-.7v4.200" stroke="#e4407f" stroke-width=".8" fill="none"/><circle cx="364.700" cy="490.400" r=".9" fill="#e4407f"/><circle cx="367.500" cy="489.700" r=".9" fill="#e4407f"/>
  <!-- terminal -->
  <rect x="374" y="483.300" width="10.400" height="9.400" rx="1" fill="#1f1f1f" stroke="#595959" stroke-width=".5"/><path d="M375.600 485.300l1.500 1.200-1.500 1.200" stroke="#ddd" stroke-width=".6" fill="none"/>
  <!-- dark yellow app -->
  <rect x="386.300" y="483.600" width="10.400" height="8.800" rx=".8" fill="#26231c"/><rect x="387.300" y="485" width="8.400" height="1.300" fill="#c9a84c"/><rect x="387.300" y="488.800" width="3.500" height="2.200" fill="#7a6a3a"/><rect x="391.800" y="488.800" width="3.900" height="2.200" fill="#7a6a3a"/>
  <!-- black face -->
  <circle cx="404" cy="488" r="5.200" fill="#0e0e0e"/><circle cx="402.200" cy="486.500" r="1.100" fill="#e9e9e9"/><circle cx="405.800" cy="486.500" r="1.100" fill="#e9e9e9"/><circle cx="404" cy="490.500" r="1" fill="#d43b3b"/>
  <!-- duck -->
  <ellipse cx="416" cy="490" rx="5" ry="3.400" fill="#f3b91d"/><circle cx="415.500" cy="485.300" r="2.700" fill="#f6c52d"/><path d="M413 485.700l-1.600.6 1.600.5z" fill="#e8791c"/>
  <!-- spotify -->
  <circle cx="428.700" cy="488" r="5.300" fill="#1ed760"/><path d="M425.800 486.300c2-.6 4.200-.4 6 .6M426.200 488.200c1.700-.5 3.500-.3 5 .5M426.600 490c1.300-.4 2.700-.2 3.900.4" stroke="#14301d" stroke-width=".8" fill="none" stroke-linecap="round"/>
  <!-- Ai -->
  <rect x="436" y="483" width="10.600" height="10.200" rx=".7" fill="#2a1602" stroke="#f29a2a" stroke-width=".7"/>
  <!-- PS-ish -->
  <rect x="448.300" y="483" width="10.400" height="10.200" rx=".7" fill="#1a2a3c"/><rect x="448.300" y="488.500" width="10.400" height="4.700" fill="#3e86c8"/><rect x="449.300" y="484" width="6" height="2.200" fill="#d9d9d9"/>
  <!-- yellow ball -->
  <circle cx="466" cy="488" r="5.700" fill="#f5b524"/><circle cx="464.700" cy="486.600" r="3" fill="#fbd05a" opacity=".7"/>
  <!-- black ball -->
  <circle cx="478.700" cy="488" r="5" fill="#111"/><circle cx="478.700" cy="488" r="4.300" fill="none" stroke="#ddd" stroke-width=".6"/><path d="M477.600 491v-5.200h1.500a1.500 1.500 0 0 1 0 3h-1.500" stroke="#f1f1f1" stroke-width=".8" fill="none"/>
  <!-- xcode-ish blue -->
  <rect x="486.500" y="483.400" width="10" height="9.600" rx="1.500" fill="#e8f1fa" transform="rotate(-8 491.500 488)"/><rect x="488.500" y="485" width="6.500" height="6.500" rx="1" fill="#2f8fe8" transform="rotate(-8 491.500 488)"/>
  <!-- calendar -->
  <rect x="499" y="483.400" width="9.800" height="9.600" rx="1" fill="#f6f6f6"/><rect x="499" y="483.400" width="9.800" height="2.600" rx="1" fill="#e2463f"/><rect x="501.500" y="487.500" width="4.800" height="3.800" fill="#8a8a8a" opacity=".75"/>
  <!-- Ae -->
  <rect x="511.300" y="483" width="10.600" height="10.200" rx=".6" fill="#2a0f4e" stroke="#b48cf0" stroke-width=".7"/>
  <!-- Pr -->
  <rect x="524" y="483" width="10.600" height="10.200" rx=".6" fill="#2a0f4e" stroke="#d68cf2" stroke-width=".7"/>
  <!-- purple/orange -->
  <rect x="536.500" y="484" width="6" height="8.500" rx=".8" fill="#8a3fbf"/><rect x="541" y="483.300" width="6.200" height="9.800" rx=".8" fill="#ee8b3a"/><rect x="542.400" y="485" width="3.300" height="6.400" fill="#f6c08e"/>
  <!-- globe -->
  <circle cx="554" cy="487.600" r="5" fill="#1c5fc0"/><path d="M551 485c1.500-.8 3-.6 4 .4s2.200 1.300 3.500.7" stroke="#6db3f2" stroke-width="1.100" fill="none"/><circle cx="556.600" cy="491" r="1.900" fill="#222"/>
  <!-- separator + trash -->
  <path d="M563.200 483v10.500" stroke="#6a6a6a" stroke-width=".6"/>
  <path d="M567 484h9.600l-1.200 9.500h-7.200z" fill="#e9e9e9"/><path d="M569 485.500l.5 7M571.800 485.500v7M574.600 485.500l-.5 7" stroke="#c3c3c3" stroke-width=".6"/>
  <!-- running dots -->
  <g fill="#dcdcdc"><circle cx="316" cy="496.500" r=".7"/><circle cx="329" cy="496.500" r=".7"/><circle cx="341.500" cy="496.500" r=".7"/><circle cx="466" cy="496.500" r=".7"/><circle cx="554" cy="496.500" r=".7"/></g>
</g>
<!-- left-bottom other window remnants -->
<path d="M8 485.500l3 2.800-3 2.800z" fill="#8f8f8f"/>
<path d="M23.500 484.500v4.500M21.800 487.300l1.700 1.800 1.700-1.800" stroke="#2b2b2b" stroke-width=".9" fill="none"/>
<rect x="29.500" y="484.300" width="10" height="7.600" rx=".8" fill="#4c9fc9"/>
</svg>
<div id="texts">
<span class="t" style="left:37.70px;top:2.78px;font-size:10.5px;color:#ffffff;font-weight:700;letter-spacing:-0.323px;">Sketch</span>
<span class="t" style="left:84.00px;top:2.78px;font-size:10.5px;color:#ffffff;letter-spacing:0.520px;-webkit-text-stroke:.28px #fff;">File</span>
<span class="t" style="left:112.00px;top:2.78px;font-size:10.5px;color:#ffffff;letter-spacing:0.352px;-webkit-text-stroke:.28px #fff;">Edit</span>
<span class="t" style="left:142.00px;top:2.78px;font-size:10.5px;color:#ffffff;letter-spacing:0.372px;-webkit-text-stroke:.28px #fff;">Insert</span>
<span class="t" style="left:181.00px;top:2.78px;font-size:10.5px;color:#ffffff;letter-spacing:0.247px;-webkit-text-stroke:.28px #fff;">Layer</span>
<span class="t" style="left:219.00px;top:2.78px;font-size:10.5px;color:#ffffff;letter-spacing:0.434px;-webkit-text-stroke:.28px #fff;">Text</span>
<span class="t" style="left:250.00px;top:2.78px;font-size:10.5px;color:#ffffff;letter-spacing:0.306px;-webkit-text-stroke:.28px #fff;">Arrange</span>
<span class="t" style="left:299.00px;top:2.78px;font-size:10.5px;color:#ffffff;letter-spacing:-0.006px;-webkit-text-stroke:.28px #fff;">Share</span>
<span class="t" style="left:338.00px;top:2.78px;font-size:10.5px;color:#ffffff;letter-spacing:0.364px;-webkit-text-stroke:.28px #fff;">Plugins</span>
<span class="t" style="left:384.00px;top:2.78px;font-size:10.5px;color:#ffffff;letter-spacing:0.230px;-webkit-text-stroke:.28px #fff;">View</span>
<span class="t" style="left:418.00px;top:2.78px;font-size:10.5px;color:#ffffff;letter-spacing:0.440px;-webkit-text-stroke:.28px #fff;">Window</span>
<span class="t" style="left:467.00px;top:2.78px;font-size:10.5px;color:#ffffff;letter-spacing:0.098px;-webkit-text-stroke:.28px #fff;">Help</span>
<span class="t" style="left:676.00px;top:3.53px;font-size:9px;color:#ffffff;letter-spacing:-0.508px;-webkit-text-stroke:.28px #fff;">100%</span>
<span class="t" style="left:729.20px;top:3.00px;font-size:10px;color:#ffffff;letter-spacing:-0.125px;-webkit-text-stroke:.28px #fff;">Thu Jan 25</span>
<span class="t" style="left:784.40px;top:3.00px;font-size:10px;color:#ffffff;letter-spacing:-0.333px;-webkit-text-stroke:.28px #fff;">11:33 PM</span>
<span class="t" style="left:389.60px;top:18.47px;font-size:9.3px;color:#2c2c2c;letter-spacing:-0.147px;">2_Depth_GIF.sketch</span>
<span class="t" style="left:474.00px;top:18.47px;font-size:9.3px;color:#9b9b9b;letter-spacing:0.031px;">— Edited</span>
<span class="t" style="left:14.20px;top:52.07px;font-size:7.6px;color:#3b3b3b;letter-spacing:-0.096px;">Moonbase</span>
<span class="t" style="left:63.70px;top:52.07px;font-size:7.6px;color:#3b3b3b;letter-spacing:0.033px;">Insert</span>
<span class="t" style="left:104.30px;top:52.07px;font-size:7.6px;color:#3b3b3b;letter-spacing:-0.182px;">Group</span>
<span class="t" style="left:130.60px;top:52.07px;font-size:7.6px;color:#a9a9a9;letter-spacing:-0.034px;">Ungroup</span>
<span class="t" style="left:180.90px;top:52.07px;font-size:7.6px;color:#3b3b3b;letter-spacing:-0.141px;">Create Symbol</span>
<span class="t" style="left:265.30px;top:52.07px;font-size:7.6px;color:#3b3b3b;letter-spacing:-0.168px;">63%</span>
<span class="t" style="left:317.60px;top:52.07px;font-size:7.6px;color:#3b3b3b;letter-spacing:-0.098px;">Edit</span>
<span class="t" style="left:338.60px;top:52.07px;font-size:7.6px;color:#3b3b3b;letter-spacing:-0.081px;">Transform</span>
<span class="t" style="left:377.80px;top:52.07px;font-size:7.6px;color:#3b3b3b;letter-spacing:-0.179px;">Rotate</span>
<span class="t" style="left:405.90px;top:52.07px;font-size:7.6px;color:#a9a9a9;letter-spacing:-0.103px;">Flatten</span>
<span class="t" style="left:449.80px;top:52.07px;font-size:7.6px;color:#3b3b3b;letter-spacing:-0.214px;">Mask</span>
<span class="t" style="left:473.40px;top:52.07px;font-size:7.6px;color:#3b3b3b;letter-spacing:-0.200px;">Scale</span>
<span class="t" style="left:513.20px;top:52.07px;font-size:7.6px;color:#a9a9a9;letter-spacing:-0.189px;">Union</span>
<span class="t" style="left:538.00px;top:52.07px;font-size:7.6px;color:#a9a9a9;letter-spacing:0.090px;">Subtract</span>
<span class="t" style="left:572.70px;top:52.07px;font-size:7.6px;color:#a9a9a9;letter-spacing:0.019px;">Intersect</span>
<span class="t" style="left:608.20px;top:52.07px;font-size:7.6px;color:#a9a9a9;">Difference</span>
<span class="t" style="left:664.10px;top:52.07px;font-size:7.6px;color:#a9a9a9;letter-spacing:-0.237px;">Forward</span>
<span class="t" style="left:697.70px;top:52.07px;font-size:7.6px;color:#3b3b3b;letter-spacing:-0.118px;">Backward</span>
<span class="t" style="left:751.00px;top:52.07px;font-size:7.6px;color:#3b3b3b;letter-spacing:0.079px;">Mirror</span>
<span class="t" style="left:777.60px;top:52.07px;font-size:7.6px;color:#a9a9a9;letter-spacing:-0.129px;">Cloud</span>
<span class="t" style="left:820.90px;top:52.07px;font-size:7.6px;color:#3b3b3b;letter-spacing:-0.157px;">View</span>
<span class="t" style="left:860.70px;top:52.07px;font-size:7.6px;color:#3b3b3b;letter-spacing:-0.092px;">Export</span>
<span class="t" style="left:7.00px;top:69.45px;font-size:8.4px;color:#262626;letter-spacing:-0.491px;">Page 1</span>
<span class="t" style="left:19.00px;top:89.01px;font-size:8.1px;color:#262626;letter-spacing:0.006px;">Contacts</span>
<span class="t" style="left:35.50px;top:107.81px;font-size:8.1px;color:#262626;">News - For You_Isometric</span>
<span class="t" style="left:46.60px;top:126.51px;font-size:8.1px;color:#ffffff;letter-spacing:-0.121px;">News - For You_Top_Iso...</span>
<span class="t" style="left:46.60px;top:145.01px;font-size:8.1px;color:#262626;letter-spacing:-0.032px;">News - For You_Right_Isometric</span>
<span class="t" style="left:46.60px;top:163.61px;font-size:8.1px;color:#262626;letter-spacing:-0.016px;">News - For You_Left_Isometric</span>
<span class="t" style="left:58.50px;top:467.06px;font-size:8px;color:#ababab;letter-spacing:0.036px;">Filter</span>
<span class="t" style="left:163.40px;top:467.61px;font-size:6.2px;color:#4a7fd0;font-weight:700;">0</span>
<span class="t" style="left:202.00px;top:109.67px;font-size:7.6px;color:#9c9c9c;letter-spacing:0.329px;">Contacts</span>
<span class="t" style="left:231.40px;top:138.42px;font-size:9.2px;color:#ffffff;font-weight:700;letter-spacing:-0.517px;">All</span>
<span class="t" style="left:252.20px;top:166.49px;font-size:7.0px;color:#4c4c4c;letter-spacing:-0.409px;">Janet Perkins</span>
<span class="t" style="left:252.20px;top:190.99px;font-size:7.0px;color:#4c4c4c;letter-spacing:-0.431px;">Mary Johnson</span>
<span class="t" style="left:252.20px;top:215.29px;font-size:7.0px;color:#4c4c4c;letter-spacing:-0.464px;">Peter Carlsson</span>
<span class="t" style="left:252.20px;top:239.79px;font-size:7.0px;color:#4c4c4c;letter-spacing:-0.481px;">Trevor Hansen</span>
<span class="t" style="left:252.20px;top:270.89px;font-size:7.0px;color:#4c4c4c;letter-spacing:-0.459px;">Aaron Bennett</span>
<span class="t" style="left:252.20px;top:295.89px;font-size:7.0px;color:#4c4c4c;letter-spacing:-0.492px;">Abbey Christensen</span>
<span class="t" style="left:252.20px;top:320.19px;font-size:7.0px;color:#4c4c4c;letter-spacing:-0.444px;">Ali Connors</span>
<span class="t" style="left:252.20px;top:344.39px;font-size:7.0px;color:#4c4c4c;letter-spacing:-0.460px;">Alex Nelson</span>
<span class="t" style="left:252.20px;top:369.09px;font-size:7.0px;color:#4c4c4c;letter-spacing:-0.496px;">Anthony Stevens</span>
<span class="t" style="left:207.80px;top:270.70px;font-size:10px;color:#e96a94;letter-spacing:0.728px;">A</span>
<span class="t" style="left:745.50px;top:91.45px;font-size:8.4px;color:#2f2f2f;letter-spacing:-0.100px;">Position</span>
<span class="t" style="left:745.50px;top:115.45px;font-size:8.4px;color:#2f2f2f;letter-spacing:-0.324px;">Size</span>
<span class="t" style="left:745.50px;top:139.85px;font-size:8.4px;color:#2f2f2f;letter-spacing:-0.151px;">Transform</span>
<span class="t" style="left:745.50px;top:182.45px;font-size:8.4px;color:#2f2f2f;letter-spacing:-0.266px;">Resizing</span>
<span class="t" style="left:745.50px;top:244.95px;font-size:8.4px;color:#2f2f2f;letter-spacing:-0.129px;">Opacity</span>
<span class="t" style="left:745.50px;top:263.25px;font-size:8.4px;color:#2f2f2f;letter-spacing:-0.201px;">Blending</span>
<span class="t" style="left:792.00px;top:91.65px;font-size:8.2px;color:#2f2f2f;letter-spacing:-0.008px;">406.75</span>
<span class="t" style="left:843.50px;top:91.65px;font-size:8.2px;color:#2f2f2f;letter-spacing:0.214px;">-48.75</span>
<span class="t" style="left:792.00px;top:115.65px;font-size:8.2px;color:#2f2f2f;letter-spacing:-0.200px;">781.5</span>
<span class="t" style="left:843.50px;top:115.65px;font-size:8.2px;color:#2f2f2f;letter-spacing:-0.008px;">390.75</span>
<span class="t" style="left:792.00px;top:139.75px;font-size:8.2px;color:#2f2f2f;">0º</span>
<span class="t" style="left:807.10px;top:103.90px;font-size:6.6px;color:#4a4a4a;">X</span>
<span class="t" style="left:858.50px;top:103.90px;font-size:6.6px;color:#4a4a4a;">Y</span>
<span class="t" style="left:800.01px;top:127.80px;font-size:6.8px;color:#4a4a4a;">Width</span>
<span class="t" style="left:850.87px;top:127.80px;font-size:6.8px;color:#4a4a4a;">Height</span>
<span class="t" style="left:798.68px;top:151.90px;font-size:6.8px;color:#4a4a4a;">Rotate</span>
<span class="t" style="left:855.22px;top:151.90px;font-size:6.8px;color:#4a4a4a;">Flip</span>
<span class="t" style="left:845.30px;top:173.06px;font-size:8px;color:#2f2f2f;letter-spacing:0.095px;">Fix Width</span>
<span class="t" style="left:845.30px;top:192.66px;font-size:8px;color:#2f2f2f;letter-spacing:0.068px;">Fix Height</span>
<span class="t" style="left:747.60px;top:219.55px;font-size:8.2px;color:#262626;font-style:italic;letter-spacing:-0.115px;">No Shared Style</span>
<span class="t" style="left:855.70px;top:245.17px;font-size:7.8px;color:#2f2f2f;letter-spacing:-0.288px;">100%</span>
<span class="t" style="left:795.50px;top:263.66px;font-size:8px;color:#2f2f2f;letter-spacing:-0.047px;">Normal</span>
<span class="t" style="left:745.50px;top:286.95px;font-size:8.2px;color:#454545;font-weight:700;letter-spacing:-0.278px;">Fills</span>
<span class="t" style="left:795.50px;top:308.66px;font-size:8px;color:#9b9b9b;letter-spacing:-0.047px;">Normal</span>
<span class="t" style="left:795.50px;top:328.86px;font-size:8px;color:#9b9b9b;letter-spacing:-0.047px;">Normal</span>
<span class="t" style="left:795.50px;top:349.16px;font-size:8px;color:#2f2f2f;letter-spacing:-0.047px;">Normal</span>
<span class="t" style="left:855.70px;top:308.77px;font-size:7.8px;color:#c4c4c4;letter-spacing:-0.288px;">100%</span>
<span class="t" style="left:855.70px;top:328.97px;font-size:7.8px;color:#c4c4c4;letter-spacing:-0.288px;">100%</span>
<span class="t" style="left:855.70px;top:349.27px;font-size:7.8px;color:#2f2f2f;letter-spacing:-0.288px;">100%</span>
<span class="t" style="left:765.46px;top:363.60px;font-size:6.8px;color:#4a4a4a;">Fill</span>
<span class="t" style="left:802.17px;top:363.60px;font-size:6.8px;color:#4a4a4a;">Blending</span>
<span class="t" style="left:854.48px;top:363.60px;font-size:6.8px;color:#4a4a4a;">Opacity</span>
<span class="t" style="left:745.50px;top:381.45px;font-size:8.2px;color:#444444;font-weight:700;letter-spacing:-0.201px;">Borders</span>
<span class="t" style="left:745.50px;top:399.45px;font-size:8.2px;color:#444444;font-weight:700;letter-spacing:-0.208px;">Shadows</span>
<span class="t" style="left:745.50px;top:417.65px;font-size:8.2px;color:#444444;font-weight:700;letter-spacing:-0.133px;">Inner Shadows</span>
<span class="t" style="left:745.50px;top:435.65px;font-size:8.2px;color:#444444;font-weight:700;letter-spacing:-0.194px;">Gaussian Blur</span>
<span class="t" style="left:745.50px;top:466.85px;font-size:8.2px;color:#444444;font-weight:700;letter-spacing:-0.072px;">Make Exportable</span>
<span class="t" style="left:745.50px;top:452.75px;font-size:8.2px;color:#3a3a3a;font-weight:700;letter-spacing:0.074px;">Magic Mirror 3</span>
<span class="t" style="left:45.50px;top:484.96px;font-size:8px;color:#1c1c1c;font-weight:700;letter-spacing:-0.516px;">list</span>
<span class="t" style="left:438.00px;top:485.61px;font-size:6.2px;color:#f5a03a;font-weight:700;">Ai</span>
<span class="t" style="left:513.00px;top:485.61px;font-size:6.2px;color:#c9a6f7;font-weight:700;">Ae</span>
<span class="t" style="left:526.00px;top:485.61px;font-size:6.2px;color:#e0a6f7;font-weight:700;">Pr</span>
</div>
</body>
</html>
